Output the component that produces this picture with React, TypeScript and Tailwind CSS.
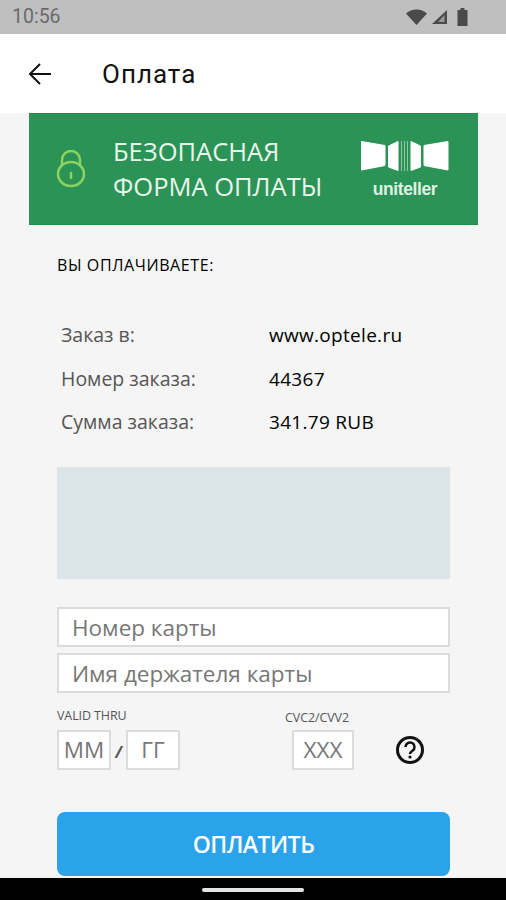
export default function App() {
  return (
    <div className="w-[506px] h-[900px] flex flex-col overflow-hidden bg-[#f5f5f5] font-['Open_Sans',sans-serif]">
      <div className="h-[34px] shrink-0 bg-[#bfbfbf] flex items-center justify-between pl-[12px] pr-[38px]">
        <span className="font-['Roboto',sans-serif] text-[19.500px] text-[#6b6b6b]">10:56</span>
        <div className="flex items-center gap-[3px]">
          <svg width="21" height="16" viewBox="0 0 21 16"><path d="M0 4.500C3 1.800 6.500 .5 10.500 .5S18 1.800 21 4.500L10.500 16Z" fill="#4a4a4a" /></svg>
          <svg width="16" height="16" viewBox="0 0 16 16" className="ml-[1px]"><path d="M16 1V15H1Z" fill="#4a4a4a" /><path d="M13.500 6V13H7Z" fill="#9a9a9a" /></svg>
          <svg width="11" height="18" viewBox="0 0 11 18" className="ml-[7px]"><path d="M3.500 0H7.500V2H10.500V18H.5V2H3.500Z" fill="#4a4a4a" /></svg>
        </div>
      </div>
      <div className="h-[79px] shrink-0 bg-white flex items-center pl-[28px]">
        <svg width="24" height="24" viewBox="0 0 24 24" fill="none" stroke="#111" strokeWidth="2"><path d="M23 12H2M12 2 2 12l10 10" /></svg>
        <span className="ml-[50px] pt-[2px] font-['Roboto',sans-serif] text-[26px] text-[#111] tracking-[1px]">Оплата</span>
      </div>
      <div className="ml-[29px] w-[449px] h-[112px] shrink-0 bg-[#2b9355] border-y border-[#228b4a] flex items-center pl-[27px] pr-[28px]">
        <svg width="30" height="38" viewBox="0 0 30 38" fill="none" stroke="#8bd45f" strokeWidth="2.500">
          <path d="M6 15V10a9 9 0 0 1 18 0v5" />
          <ellipse cx="15" cy="24" rx="13" ry="12" />
          <path d="M15 23v5" strokeLinecap="round" />
        </svg>
        <div className="ml-[27px] flex-1 text-[25.500px] leading-[35px] text-[#e9f5ec]">
          <div>БЕЗОПАСНАЯ</div>
          <div>ФОРМА ОПЛАТЫ</div>
        </div>
        <div className="flex flex-col items-center">
          <svg width="90" height="32" viewBox="0 0 90 32" fill="#fff" stroke="#fff" strokeWidth="1" strokeLinejoin="round">
            <path d="M1.500 1.500 25 5.500V25.500L1.500 30Z" />
            <path d="M28.500 6 38 1.500V30.500L28.500 27Z" />
            <path d="M41.500 1V31M44.500 1V31M47.500 1V31" strokeWidth=".8" opacity=".6" fill="none" />
            <path d="M60.500 6 51 1.500V30.500L60.500 27Z" />
            <path d="M88 1.500 64 5.500V25.500L88 30Z" />
          </svg>
          <span className="font-['Liberation_Sans',sans-serif] font-bold text-[17.500px] leading-[20px] mt-[7px] text-[#dff0e4] tracking-[-0.4px]">uniteller</span>
        </div>
      </div>
      <div className="mt-[31px] ml-[57px] text-[16px] leading-[18px] font-medium text-black tracking-[0.6px]">ВЫ ОПЛАЧИВАЕТЕ:</div>
      <div className="mt-[49px] ml-[61px] flex flex-col gap-[19.500px] text-[19.500px] leading-[24px]">
        {[["Заказ в:", "www.optele.ru"], ["Номер заказа:", "44367"], ["Сумма заказа:", "341.79 RUB"]].map(([k, v]) => (
          <div key={k} className="flex">
            <span className="w-[208px] text-[#555]">{k}</span>
            <span className="text-black font-medium text-[19px] tracking-[0.3px]">{v}</span>
          </div>
        ))}
      </div>
      <div className="mt-[33px] ml-[57px] w-[393px] h-[112px] shrink-0 bg-[#dce6e8]" />
      <div className="mt-[28px] ml-[57px] w-[393px] h-[40px] shrink-0 bg-white border-2 border-[#dcdcdc] pl-[13px] pt-[1px] flex items-center text-[22.500px] text-[#777]">Номер карты</div>
      <div className="mt-[6px] ml-[57px] w-[393px] h-[40px] shrink-0 bg-white border-2 border-[#dcdcdc] pl-[13px] pt-[1px] flex items-center text-[22.500px] text-[#777]">Имя держателя карты</div>
      <div className="mt-[16px] ml-[57px] flex">
        <div className="w-[228px]">
          <div className="text-[12.500px] leading-[14px] text-[#555] tracking-[-0.1px]">VALID THRU</div>
          <div className="mt-[7px] flex items-center">
            <div className="w-[54px] h-[40px] bg-white border-2 border-[#dcdcdc] flex items-center justify-center text-[22.500px] text-[#777]">ММ</div>
            <span className="w-[15px] text-center text-[16px] font-bold text-[#555] italic mt-[4px]">/</span>
            <div className="w-[54px] h-[40px] bg-white border-2 border-[#dcdcdc] flex items-center justify-center text-[22.500px] text-[#777]">ГГ</div>
          </div>
        </div>
        <div className="mt-[2px]">
          <div className="text-[12.500px] leading-[14px] text-[#555] tracking-[-0.1px]">CVC2/CVV2</div>
          <div className="mt-[5px] flex items-center">
            <div className="ml-[7px] w-[62px] h-[40px] bg-white border-2 border-[#dcdcdc] flex items-center justify-center text-[22.500px] text-[#777]">XXX</div>
            <svg width="30" height="30" viewBox="0 0 30 30" fill="none" className="ml-[41px]">
              <circle cx="15" cy="15" r="12.500" stroke="#111" strokeWidth="3" />
              <path d="M10.500 12a4.500 4.500 0 1 1 7 3.700c-1.500 1-2.500 1.700-2.500 3.300" stroke="#111" strokeWidth="2.500" />
              <circle cx="15" cy="22" r="1.600" fill="#111" />
            </svg>
          </div>
        </div>
      </div>
      <div className="mt-[42px] ml-[57px] w-[393px] h-[64px] shrink-0 rounded-[8px] bg-[#2aa3ea] flex items-center justify-center text-[23px] font-semibold text-white tracking-[-0.5px]">ОПЛАТИТЬ</div>
      <div className="mt-[2px] flex-1 bg-black flex items-start justify-center pt-[10px]">
        <div className="w-[102px] h-[4px] rounded-full bg-[#e5e5e5]" />
      </div>
    </div>
  );
}
